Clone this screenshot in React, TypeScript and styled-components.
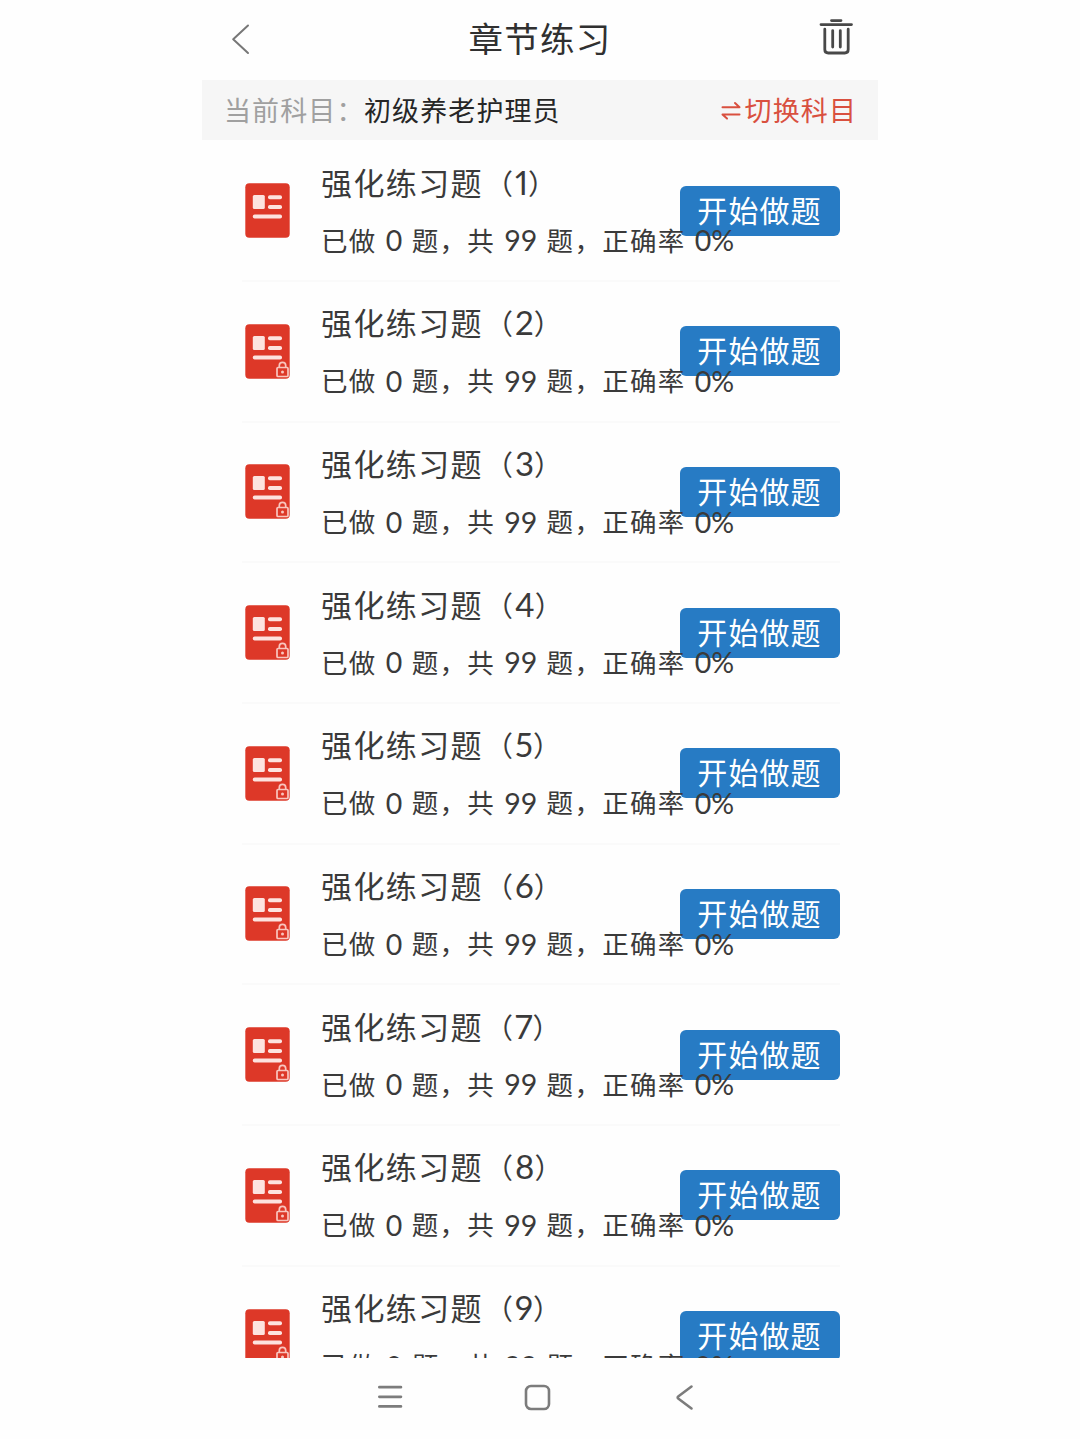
import React from 'react';
import styled, { createGlobalStyle } from 'styled-components';

const GlobalStyle = createGlobalStyle`
  * { box-sizing: border-box; }
  body {
    margin: 0;
    background: #fefefe;
    font-family: Lato, 'Noto Sans CJK SC', sans-serif;
    color: #3a3a3a;
  }
`;

const CJK = `'Noto Sans CJK SC', sans-serif`;

const Screen = styled.div`
  width: 676px;
  height: 1439px;
  margin: 0 auto;
  display: flex;
  flex-direction: column;
  overflow: hidden;
`;

const Header = styled.header`
  flex: none;
  height: 80px;
  padding: 0 23px 0 28px;
  display: grid;
  grid-template-columns: 60px 1fr 60px;
  align-items: center;
`;

const PageTitle = styled.h1`
  margin: 0 5px 6px 0;
  font: 400 34.5px/50px ${CJK};
  letter-spacing: 1.3px;
  text-align: center;
  color: #303030;
`;

const IconButton = styled.button<{ $end?: boolean }>`
  display: flex;
  justify-content: ${(p) => (p.$end ? 'flex-end' : 'flex-start')};
  padding: 0;
  border: 0;
  background: none;
  margin-bottom: ${(p) => (p.$end ? 6 : 2)}px;
`;

const SubjectBar = styled.section`
  flex: none;
  height: 60px;
  padding: 0 21px 0 22px;
  display: flex;
  align-items: center;
  background: #f6f6f6;
  font: 400 27px/40px ${CJK};
  letter-spacing: 1.1px;
`;

const SubjectLabel = styled.span`
  width: 140px;
  color: #a0a0a0;
  white-space: nowrap;
`;

const SubjectName = styled.span`
  flex: 1;
  color: #262626;
`;

const SwitchLink = styled.a`
  display: flex;
  align-items: center;
  gap: 4px;
  color: #d9503f;
`;

const List = styled.ul`
  flex: none;
  height: 1218px;
  margin: 0;
  padding: 1.2px 38px 0 40px;
  list-style: none;
  overflow: hidden;
`;

const Row = styled.li`
  height: 140.7px;
  padding-left: 3px;
  display: grid;
  grid-template-columns: 76px 1fr 160px;
  align-items: center;
  border-bottom: 2px solid #fafafa;
`;

const RowText = styled.div`
  min-width: 0;
  padding-top: 3px;
  position: relative;
  z-index: 1;
  pointer-events: none;
  white-space: nowrap;
`;

const RowTitle = styled.div`
  padding-top: 1px;
  font-family: Lato, ${CJK};
  font-size: 31px;
  line-height: 57px;
  letter-spacing: 1.4px;
`;

const Paren = styled.span<{ $close?: boolean }>`
  margin-left: ${(p) => (p.$close ? 0 : 2)}px;
  font-size: 28px;
  line-height: 1;
  letter-spacing: 0;
`;

const RowDigit = styled.span`
  margin: 0 0 0 2px;
  font-size: 33px;
  line-height: 1;
  font-variant-numeric: proportional-nums;
  letter-spacing: 0;
`;

const RowMeta = styled.div`
  font-family: Lato, ${CJK};
  font-size: 26.5px;
  line-height: 59px;
  letter-spacing: 1.3px;
`;

const Count = styled.span`
  margin: 0 9.3px 0 9.2px;
  font-size: 28.5px;
  line-height: 1;
  vertical-align: -0.6px;
  letter-spacing: 0;
`;

const StartButton = styled.button`
  height: 50px;
  margin: 0;
  padding: 0 0 4px;
  border: 0;
  border-radius: 6px;
  background: #277bc4;
  color: #fff;
  font: 400 30px/46px ${CJK};
  letter-spacing: 1.1px;
  text-indent: -1px;
  white-space: nowrap;
`;

const NavBar = styled.nav`
  flex: 1;
  display: flex;
  align-items: center;
  justify-content: center;
  gap: 121px;
  padding: 0 5px 3px 0;
`;

function BackIcon() {
  return (
    <svg width="24" height="32" viewBox="0 0 24 32" fill="none" stroke="#777" strokeWidth="2" strokeLinecap="round" strokeLinejoin="round">
      <path d="M18 2.5 3.2 16.2 18 30" />
    </svg>
  );
}

function TrashIcon() {
  return (
    <svg width="36" height="38" viewBox="0 0 36 38" fill="none" stroke="#484848" strokeWidth="2.8" strokeLinecap="round">
      <path d="M12.500 2.600h9.500M2 6.600h30.500M5.800 11.200V31.500q0 3.500 3.500 3.500H25.700q3.500 0 3.500-3.500V11.200M13.700 12.600v16.500M21.300 12.600v16.500" />
    </svg>
  );
}

function SwapIcon() {
  return (
    <svg width="20" height="22" viewBox="0 0 20 22" fill="none" stroke="#d9503f" strokeWidth="2" strokeLinecap="round" strokeLinejoin="round">
      <path d="M1.500 8.200H18.500L14 4M18.500 15.400H1.500L6 19.600" />
    </svg>
  );
}

function PaperIcon({ locked }: { locked: boolean }) {
  return (
    <svg width="45" height="55" viewBox="0 0 45 55">
      <rect x=".3" y=".3" width="44.400" height="54.400" rx="4" fill="#dd3828" />
      <g fill="#fde3df">
        <rect x="7.800" y="12" width="12" height="14" rx="1.500" />
        <rect x="23" y="12.300" width="14" height="4" rx="1.800" />
        <rect x="23" y="22" width="14" height="4" rx="1.800" />
        <rect x="7.800" y="31.500" width="29.200" height="4" rx="1.800" />
      </g>
      {locked && (
        <g fill="none" stroke="#f9c6bf" strokeWidth="1.700">
          <rect x="32" y="43.500" width="11" height="9" rx="1" />
          <path d="M34.300 43.500v-2a3.200 3.200 0 0 1 6.400 0v2" />
          <circle cx="37.500" cy="48" r="1.500" fill="#f9c6bf" stroke="none" />
        </g>
      )}
    </svg>
  );
}

function MenuIcon() {
  return (
    <svg width="26" height="26" viewBox="0 0 26 26" stroke="#7c7c7c" strokeWidth="2.800" strokeLinecap="round">
      <path d="M2.400 3.200h21.500M2.400 12.800h21.500M2.400 22.400h21.500" />
    </svg>
  );
}

function HomeIcon() {
  return (
    <svg width="27" height="27" viewBox="0 0 27 27" fill="none" stroke="#7c7c7c" strokeWidth="2.600">
      <rect x="2" y="2" width="23" height="23" rx="5" />
    </svg>
  );
}

function NavBackIcon() {
  return (
    <svg width="26" height="27" viewBox="0 0 26 27" fill="none" stroke="#7c7c7c" strokeWidth="2.600" strokeLinecap="round" strokeLinejoin="round">
      <path d="M19.500 2.500 6.500 12.200q-1.700 1.300 0 2.600L19.500 24.500" />
    </svg>
  );
}

const chapters = Array.from({ length: 9 }, (_, i) => ({
  number: i + 1,
  done: 0,
  total: 99,
  accuracy: 0,
  locked: i > 0,
}));

export default function App() {
  return (
    <>
      <GlobalStyle />
      <Screen>
        <Header>
          <IconButton aria-label="返回"><BackIcon /></IconButton>
          <PageTitle>章节练习</PageTitle>
          <IconButton $end aria-label="删除"><TrashIcon /></IconButton>
        </Header>
        <SubjectBar>
          <SubjectLabel>当前科目：</SubjectLabel>
          <SubjectName>初级养老护理员</SubjectName>
          <SwitchLink><SwapIcon />切换科目</SwitchLink>
        </SubjectBar>
        <List>
          {chapters.map((c) => (
            <Row key={c.number}>
              <PaperIcon locked={c.locked} />
              <RowText>
                <RowTitle>
                  强化练习题<Paren>（</Paren><RowDigit>{c.number}</RowDigit><Paren $close>）</Paren>
                </RowTitle>
                <RowMeta>
                  已做<Count>{c.done}</Count>题，共<Count>{c.total}</Count>题，正确率<Count>{c.accuracy}%</Count>
                </RowMeta>
              </RowText>
              <StartButton>开始做题</StartButton>
            </Row>
          ))}
        </List>
        <NavBar>
          <MenuIcon />
          <HomeIcon />
          <NavBackIcon />
        </NavBar>
      </Screen>
    </>
  );
}
